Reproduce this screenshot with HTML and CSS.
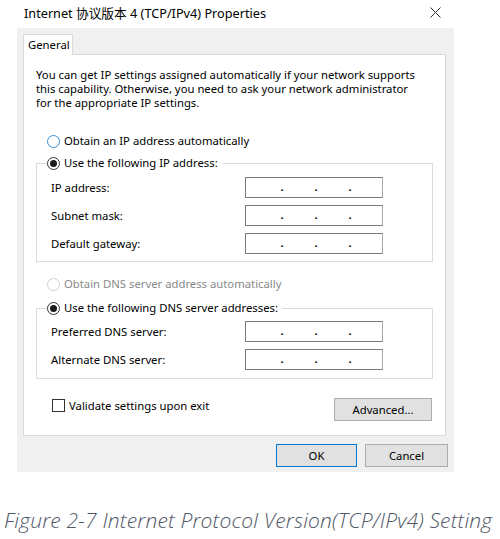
FILE: index.html
```html
<!DOCTYPE html>
<html>
<head>
<meta charset="utf-8">
<link rel="stylesheet" href="styles.css">
</head>
<body>
<div class="window">
  <div class="titlebar">
    <span class="title">Internet 协议版本 4 (TCP/IPv4) Properties</span>
    <svg class="close" width="11" height="11" viewBox="0 0 11 11"><path d="M0.5 0.5 L10.5 10.5 M10.5 0.5 L0.5 10.5" stroke="#333" stroke-width="1" fill="none"/></svg>
  </div>
  <div class="dialog">
    <div class="tab">General</div>
    <div class="panel">
      <p class="intro">You can get IP settings assigned automatically if your network supports this capability. Otherwise, you need to ask your network administrator for the appropriate IP settings.</p>
      <div class="radio-row first">
        <span class="radio hover"></span><span>Obtain an IP address automatically</span>
      </div>
      <fieldset class="group g1">
        <legend class="radio-row"><span class="radio checked"></span><span>Use the following IP address:</span></legend>
        <div class="fields">
          <span class="label">IP address:</span><span class="ipbox"><span>.</span><span>.</span><span>.</span></span>
          <span class="label">Subnet mask:</span><span class="ipbox"><span>.</span><span>.</span><span>.</span></span>
          <span class="label">Default gateway:</span><span class="ipbox"><span>.</span><span>.</span><span>.</span></span>
        </div>
      </fieldset>
      <div class="radio-row disabled">
        <span class="radio"></span><span>Obtain DNS server address automatically</span>
      </div>
      <fieldset class="group g2">
        <legend class="radio-row"><span class="radio checked"></span><span>Use the following DNS server addresses:</span></legend>
        <div class="fields">
          <span class="label">Preferred DNS server:</span><span class="ipbox"><span>.</span><span>.</span><span>.</span></span>
          <span class="label">Alternate DNS server:</span><span class="ipbox"><span>.</span><span>.</span><span>.</span></span>
        </div>
      </fieldset>
      <div class="bottom-row">
        <div class="check-row"><span class="checkbox"></span><span>Validate settings upon exit</span></div>
        <button class="btn advanced">Advanced...</button>
      </div>
    </div>
    <div class="buttons">
      <button class="btn ok">OK</button>
      <button class="btn cancel">Cancel</button>
    </div>
  </div>
  <div class="caption">Figure 2-7 Internet Protocol Version(TCP/IPv4) Setting</div>
</div>
</body>
</html>
```
FILE: styles.css
```css
* { box-sizing: border-box; }
html, body { margin: 0; padding: 0; background: #fff; }
body {
  width: 500px;
  height: 539px;
  overflow: hidden;
  font-family: "Noto Sans", "Noto Sans CJK SC", sans-serif;
  font-size: 11.3px;
  color: #000;
}
.titlebar {
  height: 28px;
  display: flex;
  align-items: center;
  justify-content: space-between;
  padding: 0 59px 4px 24px;
}
.title { font-size: 12.7px; color: #000; }
.close { display: block; }
.dialog {
  margin-left: 17px;
  width: 437px;
  height: 444px;
  background: #f0f0f0;
  padding: 6px 0 0 6px;
}
.tab {
  position: relative;
  z-index: 1;
  width: 50px;
  height: 21px;
  margin-bottom: -1px;
  background: #fff;
  border: 1px solid #d9d9d9;
  border-bottom: none;
  padding-left: 4px;
  line-height: 19px;
}
.panel {
  width: 423px;
  height: 382px;
  background: #fff;
  border: 1px solid #d9d9d9;
  padding: 13px 12px 0 12px;
}
.intro {
  margin: 0;
  max-width: 382px;
  line-height: 14px;
}
.radio-row {
  display: flex;
  align-items: center;
  gap: 4px;
  height: 16px;
  line-height: 16px;
  padding-left: 11px;
}
.radio-row.first { margin-top: 23px; }
.radio {
  width: 13px;
  height: 13px;
  border-radius: 50%;
  border: 1px solid #333;
  background: #fff;
  display: flex;
  align-items: center;
  justify-content: center;
  flex: none;
}
.radio.hover { border-color: #3c8fd6; }
.radio.checked::after {
  content: "";
  width: 7px;
  height: 7px;
  border-radius: 50%;
  background: #1a1a1a;
}
.disabled { color: #8a8a8a; margin-top: 14px; }
.disabled .radio { border-color: #cfcfcf; }
.group {
  margin: 0;
  border: 1px solid #dcdcdc;
  padding: 6px 10px 7px 14px;
  min-width: 0;
}
.g1 { margin-top: 6px; }
.g2 { margin-top: 8px; padding-top: 5px; padding-bottom: 8px; }
.group legend {
  padding: 0 4px 0 0;
  margin-left: -4px;
}
.group legend.radio-row { padding-left: 0; }
.fields {
  display: grid;
  grid-template-columns: 194px 138px;
  grid-auto-rows: 21px;
  row-gap: 7px;
  align-items: center;
}
.ipbox {
  height: 21px;
  border: 1px solid #7a7a7a;
  border-right-color: #a8a8a8;
  background: #fff;
  display: flex;
  padding-left: 19px;
  line-height: 17px;
  font-weight: bold;
}
.ipbox span { width: 34px; text-align: center; }
.bottom-row {
  margin-top: 19px;
  display: flex;
  justify-content: space-between;
  align-items: flex-start;
  padding-right: 1px;
}
.check-row {
  display: flex;
  align-items: center;
  gap: 4px;
  padding-left: 16px;
  height: 15px;
  line-height: 15px;
}
.checkbox {
  width: 13px;
  height: 13px;
  border: 1px solid #333;
  background: #fff;
}
.btn {
  font-family: inherit;
  font-size: 11.3px;
  color: #000;
  background: #e1e1e1;
  border: 1px solid #adadad;
  padding: 0;
  height: 23px;
  margin: 0;
}
.advanced { width: 98px; }
.buttons {
  display: flex;
  justify-content: flex-end;
  gap: 8px;
  padding-right: 6px;
  margin-top: 8px;
}
.ok { width: 81px; border-color: #0078d7; }
.cancel { width: 83px; }
.caption {
  margin-top: 34px;
  padding-left: 4px;
  font-family: "Open Sans", sans-serif;
  font-style: italic;
  font-weight: 300;
  font-size: 21px;
  letter-spacing: 0.18px;
  line-height: 28px;
  color: #4f5666;
  white-space: nowrap;
}
```
